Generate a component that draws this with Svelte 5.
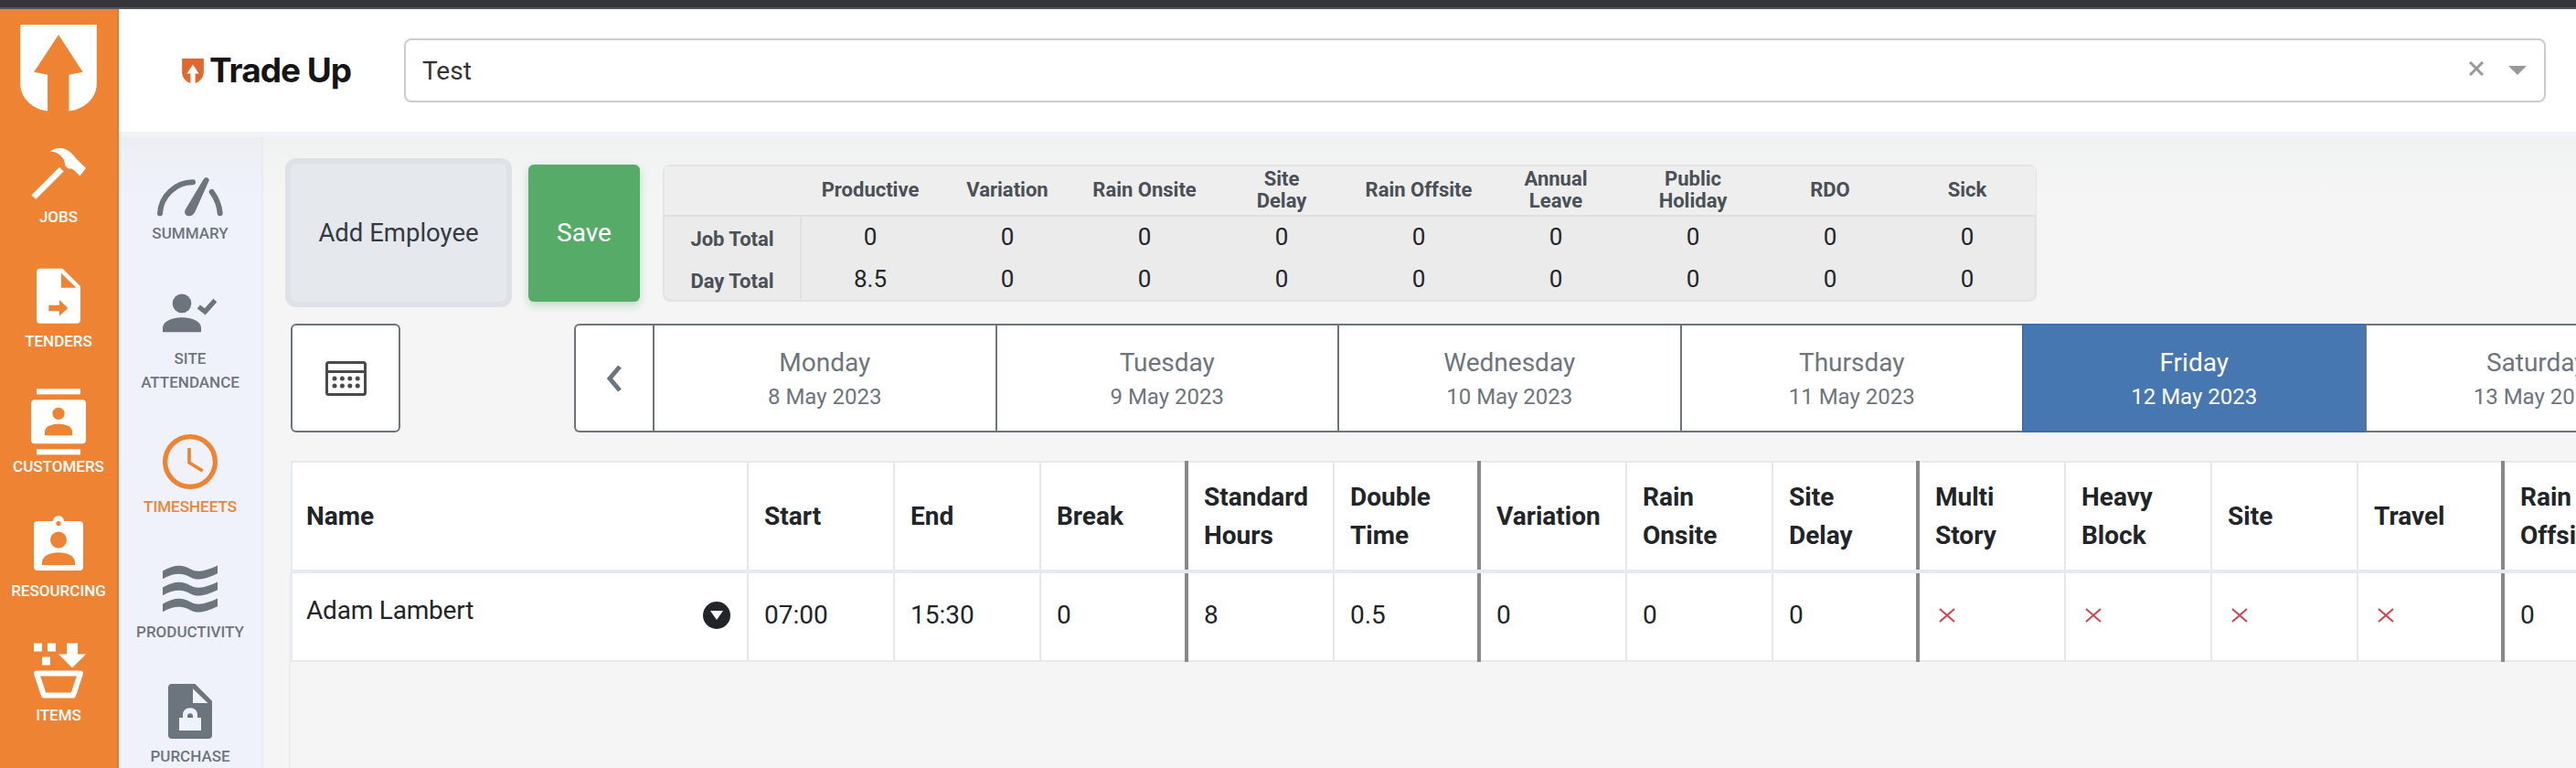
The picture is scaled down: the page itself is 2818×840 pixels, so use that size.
<script>
  const mainNav = [
    { id: 'jobs', label: 'JOBS', box: '72 449.7 240 228' },
    { id: 'tenders', label: 'TENDERS', box: '72 859 240 228' },
    { id: 'customers', label: 'CUSTOMERS', box: '72 8 240 228' },
    { id: 'resourcing', label: 'RESOURCING', box: '72 417.3 240 228' },
    { id: 'items', label: 'ITEMS', box: '72 826.5 240 228' },
  ];

  const subNav = [
    { id: 'summary', lines: ['SUMMARY'], box: '504 498 240 228' },
    { id: 'attendance', lines: ['SITE', 'ATTENDANCE'], box: '504 907.5 240 228' },
    { id: 'timesheets', lines: ['TIMESHEETS'], box: '504 135 240 228', active: true },
    { id: 'productivity', lines: ['PRODUCTIVITY'], box: '504 544.5 240 228' },
    { id: 'purchase', lines: ['PURCHASE'], box: '504 954 240 228' },
  ];

  const totals = [
    { head: ['Productive'], job: '0', day: '8.5' },
    { head: ['Variation'], job: '0', day: '0' },
    { head: ['Rain Onsite'], job: '0', day: '0' },
    { head: ['Site', 'Delay'], job: '0', day: '0' },
    { head: ['Rain Offsite'], job: '0', day: '0' },
    { head: ['Annual', 'Leave'], job: '0', day: '0' },
    { head: ['Public', 'Holiday'], job: '0', day: '0' },
    { head: ['RDO'], job: '0', day: '0' },
    { head: ['Sick'], job: '0', day: '0' },
  ];

  const days = [
    { name: 'Monday', date: '8 May 2023' },
    { name: 'Tuesday', date: '9 May 2023' },
    { name: 'Wednesday', date: '10 May 2023' },
    { name: 'Thursday', date: '11 May 2023' },
    { name: 'Friday', date: '12 May 2023', active: true },
    { name: 'Saturday', date: '13 May 2023' },
  ];

  const columns = [
    { head: ['Start'], value: '07:00' },
    { head: ['End'], value: '15:30' },
    { head: ['Break'], value: '0', thick: true },
    { head: ['Standard', 'Hours'], value: '8' },
    { head: ['Double', 'Time'], value: '0.5', thick: true },
    { head: ['Variation'], value: '0' },
    { head: ['Rain', 'Onsite'], value: '0' },
    { head: ['Site', 'Delay'], value: '0', thick: true },
    { head: ['Multi', 'Story'], cross: true },
    { head: ['Heavy', 'Block'], cross: true },
    { head: ['Site'], cross: true },
    { head: ['Travel'], cross: true, thick: true },
    { head: ['Rain', 'Offsite'], value: '0' },
  ];
</script>

<div class="topbar"></div>
<div class="app">
  <nav class="main-nav">
    <svg class="brand" viewBox="22 27 84 95">
      <path d="M22 27H106V92C106 108 92 120 75.5 122V82L90.7 79L64 38L37 79L52 82V122C36 120 22 108 22 92Z" />
    </svg>
    {#each mainNav as item}
      <div class="main-item">
        <svg class="nav-icon" viewBox={item.box}>
          {#if item.id === 'jobs'}
            <path d="M103 640L195 548L209 562L118 653Z" />
            <path d="M165 496C190 478 220 484 240 508L250 520L282 552L262 577L245 560L235 553L225 553L215 545L210 525C200 507 185 497 165 496Z" />
          {:else if item.id === 'tenders'}
            <path d="M132 882H205L264 940V1050Q264 1062 252 1062H132Q120 1062 120 1050V894Q120 882 132 882Z" />
            <path class="cut" d="M201 897V945H250Z" />
            <path class="cut" d="M160 1002H195V985L223 1012L195 1038V1022H160Z" />
          {:else if item.id === 'customers'}
            <rect x="120" y="15" width="144" height="18" />
            <rect x="120" y="213" width="144" height="18" />
            <rect x="102" y="51" width="180" height="144" rx="12" />
            <circle class="cut" cx="192" cy="96" r="20" />
            <path class="cut" d="M147 168V155C147 135 175 130 192 130C210 130 237 135 237 155V168Z" />
          {:else if item.id === 'resourcing'}
            <circle cx="192" cy="450" r="18" />
            <rect x="111" y="450" width="162" height="162" rx="12" />
            <circle class="cut" cx="192" cy="458" r="8" />
            <circle class="cut" cx="192" cy="512" r="27" />
            <path class="cut" d="M138 594V585C138 565 165 553 192 553C220 553 246 565 246 585V594Z" />
          {:else}
            <rect x="111" y="852" width="27" height="27" />
            <rect x="156" y="852" width="27" height="27" />
            <rect x="138" y="897" width="27" height="27" />
            <path d="M219 852H255V888H282L237 933L192 888H219Z" />
            <path class="basket" d="M120 951H264L240 1023H144Z" />
          {/if}
        </svg>
        <span>{item.label}</span>
      </div>
    {/each}
  </nav>

  <div class="page">
    <header class="header">
      <div class="logo">
        <svg viewBox="0 0 72 82">
          <path d="M0 0H72V45C72 65 58 78 44 82V50H56L36 20L16 50H28V82C14 78 0 65 0 45Z" />
        </svg>
        <span>Trade Up</span>
      </div>
      <div class="select">
        <span>Test</span>
        <svg class="clear" viewBox="0 0 16 16"><path d="M1 1L15 15M15 1L1 15" /></svg>
        <svg class="caret" viewBox="0 0 20 10"><path d="M0 0H20L10 10Z" /></svg>
      </div>
    </header>

    <div class="body">
      <aside class="sub-nav">
        {#each subNav as item}
          <div class="sub-item" class:active={item.active}>
            <svg class="nav-icon" viewBox={item.box}>
              {#if item.id === 'summary'}
                <path class="line" d="M525 700C528 645 575 598 633 598" />
                <path class="line" d="M695 630C710 650 720 675 722 700" />
                <path d="M607 690L668 588Q678 575 687 590L640 695Q630 712 615 708Q603 702 607 690Z" />
              {:else if item.id === 'attendance'}
                <circle cx="597" cy="994" r="31" />
                <path d="M534 1088V1075C534 1050 570 1040 597 1040C625 1040 660 1050 660 1075V1088Z" />
                <path class="line square" d="M652 1005L673 1021L706 984" />
              {:else if item.id === 'timesheets'}
                <circle class="ring" cx="624" cy="255" r="82" />
                <path class="hand" d="M621 210V258L665 285" />
              {:else if item.id === 'productivity'}
                <path d="M534 612C570 590 600 590 624 605C650 620 680 610 714 594V620C680 635 650 647 624 632C600 617 570 617 534 638Z" />
                <path d="M534 666C570 644 600 644 624 659C650 674 680 664 714 648V674C680 689 650 701 624 686C600 671 570 671 534 692Z" />
                <path d="M534 720C570 698 600 698 624 713C650 728 680 718 714 702V728C680 743 650 755 624 740C600 725 570 725 534 746Z" />
              {:else}
                <path d="M564 984H640L696 1040V1152Q696 1164 684 1164H564Q552 1164 552 1152V996Q552 984 564 984Z" />
                <path class="hole" d="M633 1000V1047H682Z" />
                <path class="hole" d="M588 1095H600V1086C600 1072 610 1063 624 1063C638 1063 648 1072 648 1086V1095H660V1137H588ZM615 1095H633V1090C633 1085 630 1081 624 1081C618 1081 615 1085 615 1090Z" fill-rule="evenodd" />
              {/if}
            </svg>
            {#each item.lines as line}
              <span>{line}</span>
            {/each}
          </div>
        {/each}
      </aside>

      <main class="main">
        <div class="toolbar">
          <button class="add">Add Employee</button>
          <button class="save">Save</button>
          <div class="totals">
            <div class="totals-head"></div>
            {#each totals as col}
              <div class="totals-head">
                {#each col.head as line}<span>{line}</span>{/each}
              </div>
            {/each}
            <div class="totals-label">Job Total</div>
            {#each totals as col}<div class="totals-value">{col.job}</div>{/each}
            <div class="totals-label">Day Total</div>
            {#each totals as col}<div class="totals-value">{col.day}</div>{/each}
          </div>
        </div>

        <div class="dates">
          <button class="calendar" aria-label="Calendar">
            <svg viewBox="0 0 45 38">
              <rect x="1.5" y="1.5" width="42" height="35" rx="2" class="cal-frame" />
              <path d="M1.5 11.5H43.5" class="cal-frame" />
              {#each [0, 1, 2, 3] as i}
                <circle cx={10 + i * 8.4} cy="19" r="2.5" />
                <circle cx={10 + i * 8.4} cy="27" r="2.5" />
              {/each}
            </svg>
          </button>
          <div class="strip">
            <div class="prev">
              <svg viewBox="0 0 18 30"><path d="M15 2L4 15L15 28" /></svg>
            </div>
            {#each days as day}
              <div class="day" class:active={day.active}>
                <span class="day-name">{day.name}</span>
                <span class="day-date">{day.date}</span>
              </div>
            {/each}
          </div>
        </div>

        <div class="sheet">
          <div class="sheet-row head">
            <div class="cell">Name</div>
            {#each columns as col}
              <div class="cell" class:thick={col.thick}>
                <div>{#each col.head as line}<span>{line}</span>{/each}</div>
              </div>
            {/each}
          </div>
          <div class="rows">
            <div class="sheet-row">
              <div class="cell name">
                <span>Adam Lambert</span>
                <div class="toggle"><svg viewBox="0 0 14 10"><path d="M0 0H14L7 10Z" /></svg></div>
              </div>
              {#each columns as col}
                <div class="cell" class:thick={col.thick}>
                  {#if col.cross}
                    <svg class="cross" viewBox="0 0 18 16"><path d="M1 1L17 15M17 1L1 15" /></svg>
                  {:else}
                    {col.value}
                  {/if}
                </div>
              {/each}
            </div>
          </div>
        </div>
      </main>
    </div>
  </div>
</div>

<style>
  :global(body) {
    margin: 0;
    height: 840px;
    overflow: hidden;
    font-family: Roboto, "Liberation Sans", sans-serif;
    color: #212529;
  }

  button {
    font-family: inherit;
    cursor: pointer;
  }

  .topbar {
    height: 8px;
    background: #35363b;
    border-bottom: 2px solid #56575b;
  }

  .app {
    display: flex;
    height: 830px;
  }

  .main-nav {
    width: 128px;
    flex-shrink: 0;
    padding-top: 17px;
    background: #ee8433;
    border-right: 2px solid #d97f38;
    color: #fff;
    box-sizing: content-box;
  }

  .brand {
    display: block;
    width: 84px;
    height: 94.5px;
    margin-left: 22px;
    fill: #fff;
  }

  .main-item {
    width: 128px;
    height: 136.4px;
    padding-bottom: 10px;
    box-sizing: border-box;
    display: flex;
    flex-direction: column;
    justify-content: flex-end;
    align-items: center;
    fill: #fff;
    font-size: 17px;
    font-weight: 500;
    line-height: 22px;
  }

  .nav-icon {
    display: block;
    width: 80px;
    height: 76px;
    flex-shrink: 0;
  }

  .main-item .cut {
    fill: #ee8433;
  }

  .basket {
    fill: none;
    stroke: #fff;
    stroke-width: 18;
    stroke-linejoin: round;
  }

  .page {
    flex: 1;
    min-width: 0;
    display: flex;
    flex-direction: column;
  }

  .header {
    height: 134px;
    flex-shrink: 0;
    display: flex;
    align-items: center;
    background: #fff;
    border-bottom: 6px solid #f1f3f8;
    box-sizing: content-box;
  }

  .logo {
    width: 312px;
    flex-shrink: 0;
    padding-left: 69px;
    box-sizing: border-box;
    display: flex;
    align-items: center;
    gap: 6px;
  }

  .logo svg {
    width: 24px;
    height: 27px;
    fill: #e2672e;
  }

  .logo span {
    font-family: Inter, Roboto, sans-serif;
    font-size: 37px;
    font-weight: 700;
    letter-spacing: -1px;
    color: #151515;
    line-height: 36px;
  }

  .select {
    flex: 1;
    height: 70px;
    margin-right: 33px;
    padding: 0 19px 0 18px;
    box-sizing: border-box;
    display: flex;
    align-items: center;
    border: 2px solid #ccc;
    border-radius: 8px;
    font-size: 28px;
    color: #333;
  }

  .select span {
    flex: 1;
  }

  .clear {
    width: 16px;
    height: 16px;
    margin: -4px 27px 0 0;
    fill: none;
    stroke: #999;
    stroke-width: 3;
  }

  .caret {
    width: 20px;
    height: 10px;
    fill: #999;
  }

  .body {
    flex: 1;
    min-height: 0;
    display: flex;
  }

  .sub-nav {
    width: 158px;
    flex-shrink: 0;
    padding-top: 16px;
    box-sizing: border-box;
    background: linear-gradient(#eceef3, #f0f2fb 60px);
    border-right: 2px solid #e8ebf4;
  }

  .sub-item {
    padding-bottom: 34.5px;
    display: flex;
    flex-direction: column;
    align-items: center;
    color: #6c757d;
    fill: #6c757d;
    font-size: 17px;
    font-weight: 500;
    line-height: 26px;
  }

  .sub-item.active {
    color: #ee8433;
  }

  .line {
    fill: none;
    stroke: #6c757d;
    stroke-width: 18;
    stroke-linecap: round;
  }

  .line.square {
    stroke-linecap: butt;
    stroke-width: 16;
  }

  .ring {
    fill: none;
    stroke: #ee8433;
    stroke-width: 16;
  }

  .hand {
    fill: none;
    stroke: #ee8433;
    stroke-width: 11;
  }

  .hole {
    fill: #f0f2fb;
  }

  .main {
    flex: 1;
    min-width: 0;
    padding: 23px 0 0 24px;
    box-sizing: border-box;
    display: flex;
    flex-direction: column;
    overflow: hidden;
    background: linear-gradient(#f0f1f1, #f5f5f5 60px);
  }

  .toolbar {
    display: flex;
    align-items: center;
    flex-shrink: 0;
  }

  .add {
    width: 248px;
    height: 163px;
    flex-shrink: 0;
    background: #e5e9ed;
    border: 6px solid #dee2e6;
    border-radius: 12px;
    font-size: 27.5px;
    color: #343a40;
  }

  .save {
    width: 122px;
    height: 150px;
    flex-shrink: 0;
    margin-left: 18px;
    background: #57ab69;
    border: none;
    border-radius: 6px;
    box-shadow: 0 4px 10px rgba(87, 171, 105, 0.35);
    font-size: 28px;
    color: #fff;
  }

  .totals {
    width: 1503px;
    height: 150px;
    flex-shrink: 0;
    margin-left: 25px;
    box-sizing: border-box;
    display: grid;
    grid-template-columns: 150px repeat(9, 150px);
    grid-template-rows: 53px 46px 46px;
    background: #ebebeb;
    border: 2px solid #e3e3e3;
    border-radius: 8px;
  }

  .totals-head {
    display: flex;
    flex-direction: column;
    align-items: center;
    justify-content: center;
    background: #eeeeee;
    border-bottom: 2px solid #e0e0e0;
    box-sizing: content-box;
    font-size: 22px;
    font-weight: 700;
    line-height: 24.5px;
    color: #495057;
    height: 53px;
  }

  .totals-label {
    display: flex;
    align-items: center;
    justify-content: center;
    padding-top: 7px;
    box-sizing: border-box;
    border-right: 2px solid #e0e0e0;
    font-size: 22px;
    font-weight: 700;
    color: #495057;
  }

  .totals-value {
    display: flex;
    align-items: center;
    justify-content: center;
    padding-top: 3px;
    box-sizing: border-box;
    font-size: 26px;
    color: #212529;
  }

  .dates {
    display: flex;
    flex-shrink: 0;
    margin: 18px 0 0 6px;
  }

  .calendar {
    width: 120px;
    height: 119px;
    flex-shrink: 0;
    padding: 0;
    display: flex;
    align-items: center;
    justify-content: center;
    background: #fff;
    border: 2px solid #6c757d;
    border-radius: 6px;
  }

  .calendar svg {
    width: 45px;
    height: 38px;
    fill: #4a4a4a;
  }

  .cal-frame {
    fill: none;
    stroke: #4a4a4a;
    stroke-width: 3;
  }

  .strip {
    display: flex;
    flex-shrink: 0;
    height: 119px;
    margin-left: 190px;
  }

  .prev {
    width: 86px;
    flex-shrink: 0;
    box-sizing: border-box;
    display: flex;
    align-items: center;
    justify-content: center;
    background: #fff;
    border: 2px solid #6c757d;
    border-right: none;
    border-radius: 6px 0 0 6px;
  }

  .prev svg {
    width: 18px;
    height: 30px;
    fill: none;
    stroke: #6c757d;
    stroke-width: 5;
  }

  .day {
    width: 374.5px;
    flex-shrink: 0;
    box-sizing: border-box;
    display: flex;
    flex-direction: column;
    align-items: center;
    background: #fff;
    border: 2px solid #6c757d;
    border-right: none;
    color: #6c757d;
  }

  .day.active {
    background: #4677b0;
    border-color: #3f6ca3;
    color: #fff;
  }

  .day-name {
    margin-top: 24px;
    font-size: 28px;
    line-height: 34px;
  }

  .day-date {
    margin-top: 5px;
    font-size: 24px;
    line-height: 30px;
  }

  .sheet {
    flex: 1;
    min-height: 0;
    margin: 31px 0 0 6px;
    display: flex;
    flex-direction: column;
  }

  .sheet-row {
    display: grid;
    grid-template-columns: 501px 160px 160px 161px repeat(11, 160px);
    width: max-content;
    background: #fff;
    border-bottom: 2px solid #e5eaee;
    font-size: 28px;
    line-height: 42px;
  }

  .sheet-row.head {
    border-top: 2px solid #e5eaee;
    border-bottom-width: 4px;
    font-weight: 700;
  }

  .rows {
    flex: 1;
    margin-left: -2px;
    border-left: 2px solid #eeeeee;
  }

  .cell {
    position: relative;
    height: 95px;
    box-sizing: border-box;
    padding: 0 16px 3px 17px;
    display: flex;
    align-items: center;
    border-right: 2px solid #e5e8eb;
  }

  .head .cell {
    height: 117px;
    padding-bottom: 0;
  }

  .head .cell span {
    display: block;
  }

  .cell.thick::after {
    content: '';
    position: absolute;
    top: 0;
    bottom: -2px;
    right: -2px;
    width: 4px;
    background: #888;
  }

  .head .cell.thick::after {
    top: -2px;
    bottom: 0;
  }

  .cell:first-child {
    padding-left: 15px;
    border-left: 2px solid #e5eaee;
  }

  .name {
    padding-right: 18px;
    justify-content: space-between;
  }

  .name span {
    padding-bottom: 10px;
    letter-spacing: -0.2px;
  }

  .toggle {
    width: 30px;
    height: 30px;
    display: flex;
    align-items: center;
    justify-content: center;
    border-radius: 50%;
    background: #212529;
  }

  .toggle svg {
    width: 14px;
    height: 10px;
    fill: #fff;
  }

  .cross {
    width: 18px;
    height: 16px;
    margin-left: 4px;
    fill: none;
    stroke: #d0414f;
    stroke-width: 2;
  }
</style>
